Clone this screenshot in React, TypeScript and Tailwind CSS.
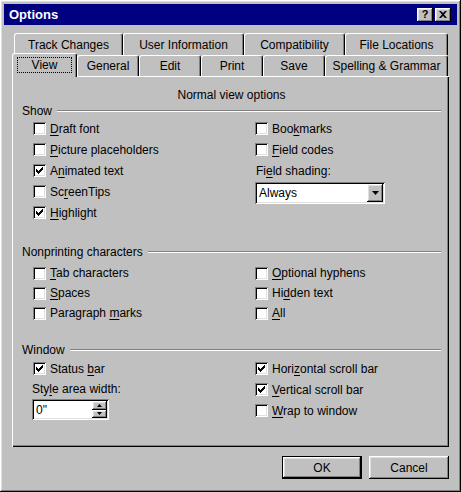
import React from "react";

const raised =
  "shadow-[inset_-1px_-1px_#000,inset_1px_1px_#fff,inset_-2px_-2px_#808080,inset_2px_2px_#dfdfdf]";
const sunken =
  "shadow-[inset_1px_1px_#808080,inset_-1px_-1px_#fff,inset_2px_2px_#000,inset_-2px_-2px_#dfdfdf]";

type LabelProps = { text: string; u?: number };

const Label = ({ text, u }: LabelProps) => {
  if (u === undefined) return <span className="whitespace-nowrap">{text}</span>;
  return (
    <span className="whitespace-nowrap">
      {text.slice(0, u)}
      <span className="underline underline-offset-[2px]">{text[u]}</span>
      {text.slice(u + 1)}
    </span>
  );
};

const CheckBox = ({ checked }: { checked?: boolean }) => (
  <span className={`flex h-[13px] w-[13px] shrink-0 items-center justify-center bg-white ${sunken}`}>
    {checked && (
      <svg width="7" height="7" viewBox="0 0 7 7">
        <path d="M0 2h1v1h1v1h1V3h1V2h1V1h1V0h1v3H6v1H5v1H4v1H3v1H2V6H1V5H0z" fill="#000" />
      </svg>
    )}
  </span>
);

const CheckRow = ({ text, u, checked, h = "h-[21px]" }: LabelProps & { checked?: boolean; h?: string }) => (
  <div className={`flex ${h} items-center gap-[4px]`}>
    <CheckBox checked={checked} />
    <Label text={text} u={u} />
  </div>
);

const GroupHeader = ({ title }: { title: string }) => (
  <div className="flex h-[14px] items-center gap-[5px]">
    <span className="whitespace-nowrap">{title}</span>
    <div className="h-[2px] flex-1 border-t border-b border-t-[#808080] border-b-white" />
  </div>
);

const Tab = ({ label, w }: { label: string; w: string }) => (
  <div
    className={`flex ${w} h-full items-center justify-center rounded-t-[3px] border-l border-t border-r border-l-white border-t-white border-r-black bg-[#c0c0c0] shadow-[inset_-1px_0_#808080]`}
  >
    {label}
  </div>
);

export default function App() {
  return (
    <div
      className={`flex h-[492px] w-[461px] flex-col bg-[#c0c0c0] px-[4px] pt-[4px] text-[12px] text-black font-['Liberation_Sans',Arial,sans-serif] ${raised}`}
    >
      {/* title bar */}
      <div className="flex h-[21px] items-center justify-between bg-[#000080] pl-[5px] pr-[6px]">
        <span className="text-[13px] font-bold text-white">Options</span>
        <div className="flex gap-[2px]">
          <div
            className={`flex h-[14px] w-[16px] items-center justify-center bg-[#c0c0c0] text-[11px] font-bold leading-none text-black ${raised}`}
          >
            ?
          </div>
          <div className={`flex h-[14px] w-[16px] items-center justify-center bg-[#c0c0c0] ${raised}`}>
            <svg width="8" height="7" viewBox="0 0 8 7">
              <path d="M0 0h2l2 2 2-2h2L5 3.5 8 7H6L4 5 2 7H0l3-3.5z" fill="#000" />
            </svg>
          </div>
        </div>
      </div>

      {/* tab rows */}
      <div className="mt-[8px] flex h-[22px] pl-[10px]">
        <Tab label="Track Changes" w="w-[109px]" />
        <Tab label="User Information" w="w-[121px]" />
        <Tab label="Compatibility" w="w-[101px]" />
        <Tab label="File Locations" w="w-[103px]" />
      </div>
      <div className="flex h-[21px] items-end pl-[8px]">
        <div className="relative z-10 mb-[-1px] flex h-[24px] w-[65px] items-center justify-center rounded-t-[3px] border-l border-t border-r border-l-white border-t-white border-r-black bg-[#c0c0c0] pb-[2px] shadow-[inset_-1px_0_#808080]">
          <span className="flex h-[16px] w-[55px] items-center justify-center border border-dotted border-black">View</span>
        </div>
        <div className="flex h-[21px]">
          <Tab label="General" w="w-[62px]" />
          <Tab label="Edit" w="w-[62px]" />
          <Tab label="Print" w="w-[62px]" />
          <Tab label="Save" w="w-[62px]" />
          <Tab label="Spelling & Grammar" w="w-[123px]" />
        </div>
      </div>

      {/* panel */}
      <div className="ml-[8px] flex h-[371px] w-[437px] flex-col pl-[10px] pr-[8px] pt-[10px] shadow-[inset_1px_1px_#fff,inset_-1px_-1px_#000,inset_-2px_-2px_#808080]">
        <div className="flex h-[18px] items-center justify-center">Normal view options</div>

        <GroupHeader title="Show" />
        <div className="grid grid-cols-[233px_1fr]">
          <div className="flex flex-col pl-[11px]">
            <CheckRow text="Draft font" u={0} />
            <CheckRow text="Picture placeholders" u={0} />
            <CheckRow text="Animated text" u={1} checked />
            <CheckRow text="ScreenTips" u={2} />
            <CheckRow text="Highlight" u={0} checked />
          </div>
          <div className="flex flex-col">
            <CheckRow text="Bookmarks" u={3} />
            <CheckRow text="Field codes" u={0} />
            <div className="flex h-[21px] items-center pl-[1px]">
              <Label text="Field shading:" u={2} />
            </div>
            <div className={`mt-[1px] flex h-[22px] w-[130px] items-center justify-between bg-white pl-[4px] pr-[2px] ${sunken}`}>
              <span>Always</span>
              <div className={`flex h-[18px] w-[16px] items-center justify-center bg-[#c0c0c0] ${raised}`}>
                <svg width="7" height="4" viewBox="0 0 7 4">
                  <path d="M0 0h7L3.5 4z" fill="#000" />
                </svg>
              </div>
            </div>
          </div>
        </div>

        <div className="mt-[22px]">
          <GroupHeader title="Nonprinting characters" />
        </div>
        <div className="mt-[4px] grid grid-cols-[233px_1fr]">
          <div className="flex flex-col pl-[11px]">
            <CheckRow text="Tab characters" u={0} h="h-[20px]" />
            <CheckRow text="Spaces" u={0} h="h-[20px]" />
            <CheckRow text="Paragraph marks" u={10} h="h-[20px]" />
          </div>
          <div className="flex flex-col">
            <CheckRow text="Optional hyphens" u={0} h="h-[20px]" />
            <CheckRow text="Hidden text" u={2} h="h-[20px]" />
            <CheckRow text="All" u={0} h="h-[20px]" />
          </div>
        </div>

        <div className="mt-[20px]">
          <GroupHeader title="Window" />
        </div>
        <div className="mt-[1px] grid grid-cols-[233px_1fr]">
          <div className="flex flex-col pl-[11px]">
            <CheckRow text="Status bar" u={7} checked />
            <div className="ml-[-1px] flex h-[20px] items-center">
              <Label text="Style area width:" u={3} />
            </div>
            <div className={`ml-[-1px] flex h-[21px] w-[77px] items-center justify-between bg-white pl-[4px] pr-[2px] ${sunken}`}>
              <span>0"</span>
              <div className="flex h-[17px] w-[15px] flex-col">
                <div className={`flex flex-1 items-center justify-center bg-[#c0c0c0] ${raised}`}>
                  <svg width="5" height="3" viewBox="0 0 5 3">
                    <path d="M2.5 0L5 3H0z" fill="#000" />
                  </svg>
                </div>
                <div className={`flex flex-1 items-center justify-center bg-[#c0c0c0] ${raised}`}>
                  <svg width="5" height="3" viewBox="0 0 5 3">
                    <path d="M0 0h5L2.5 3z" fill="#000" />
                  </svg>
                </div>
              </div>
            </div>
          </div>
          <div className="flex flex-col">
            <CheckRow text="Horizontal scroll bar" u={4} checked />
            <CheckRow text="Vertical scroll bar" u={0} checked />
            <CheckRow text="Wrap to window" u={0} />
          </div>
        </div>
      </div>

      {/* buttons */}
      <div className="ml-[8px] mt-[9px] flex w-[437px] justify-end gap-[7px]">
        <div className="flex h-[23px] w-[80px] items-center justify-center border border-black">
          <div className={`flex h-full w-full items-center justify-center ${raised}`}>OK</div>
        </div>
        <div className={`flex h-[23px] w-[80px] items-center justify-center ${raised}`}>Cancel</div>
      </div>
    </div>
  );
}
